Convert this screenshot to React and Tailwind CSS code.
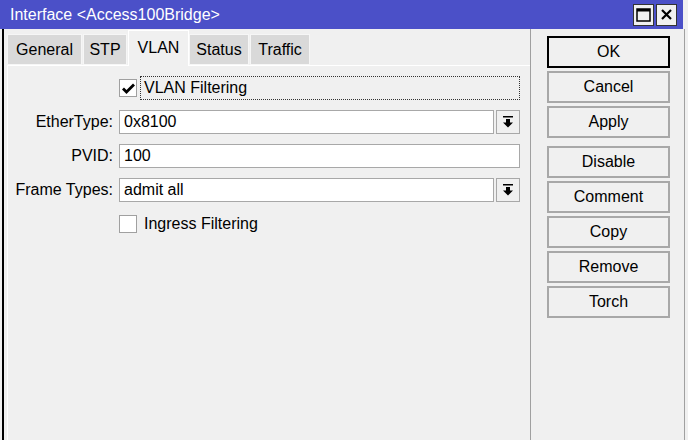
import React from 'react';

const font = { fontFamily: '"Liberation Sans", Arial, sans-serif' };

const DropButton = () => (
    <div className="w-[24px] h-[24px] ml-[2px] border border-[#a8a8a8] bg-[#f0f0f0] flex items-center justify-center">
        <svg width="12" height="14" viewBox="0 0 12 14">
            <rect x="1" y="1" width="10" height="1.5" fill="#000" />
            <path d="M4 4 H8 V7.5 H11 L6 12.5 L1 7.5 H4 Z" fill="#000" />
        </svg>
    </div>
);

const Checkbox = ({ checked }) => (
    <div className="w-[18px] h-[18px] shrink-0 bg-white border border-[#a0a0a0] flex items-center justify-center">
        {checked && (
            <svg width="13" height="11" viewBox="0 0 13 11">
                <path d="M1 5.5 L4.5 9 L12 1.5" stroke="#000" strokeWidth="2.8" fill="none" />
            </svg>
        )}
    </div>
);

const FieldRow = ({ label, value, drop }) => (
    <div className="flex items-center h-[24px]">
        <div className="w-[104px] text-right">{label}</div>
        <div className="ml-[6px] flex flex-1 h-[24px]">
            <div className="flex-1 h-[24px] bg-white border border-[#a8a8a8] flex items-center pl-[4px]">{value}</div>
            {drop && <DropButton />}
        </div>
    </div>
);

const SideButton = ({ label, primary, className = '' }) => (
    <div
        className={`w-[123px] h-[32px] flex items-center justify-center bg-[#f0f0f0] ${
            primary ? 'border-2 border-black' : 'border-2 border-[#a8a8a8]'
        } ${className}`}
    >
        {label}
    </div>
);

const App = () => {
    const tabs = [
        { name: 'General', w: 'w-[75px]' },
        { name: 'STP', w: 'w-[44px]' },
        { name: 'VLAN', w: 'w-[61px]' },
        { name: 'Status', w: 'w-[60px]' },
        { name: 'Traffic', w: 'w-[60px]' },
    ];

    return (
        <div className="w-[688px] h-[440px] bg-[#f0f0f0] overflow-hidden text-[16px] text-black" style={font}>
            {/* title bar */}
            <div className="w-[683px] h-[29px] bg-[#4b50c8] flex items-center pl-[10px] pr-[6px]">
                <span className="text-white text-[16px] flex-1">Interface &lt;Access100Bridge&gt;</span>
                <div className="flex gap-[2px]">
                    <div className="w-[21px] h-[22px] bg-[#f0f0f0] border border-[#333] flex items-center justify-center">
                        <svg width="15" height="14" viewBox="0 0 15 14">
                            <rect x="1" y="1" width="13" height="12" fill="none" stroke="#000" strokeWidth="1.5" />
                            <rect x="1" y="1" width="13" height="2.5" fill="#000" />
                        </svg>
                    </div>
                    <div className="w-[21px] h-[22px] bg-[#f0f0f0] border border-[#333] flex items-center justify-center">
                        <svg width="13" height="13" viewBox="0 0 13 13">
                            <path d="M2 2 L11 11 M11 2 L2 11" stroke="#000" strokeWidth="2.2" />
                        </svg>
                    </div>
                </div>
            </div>

            {/* body */}
            <div className="flex h-[411px] w-[683px] ml-[2px] border-l-2 border-black border-r border-r-[#a0a0a0]">
                {/* left panel */}
                <div className="w-[527px] flex flex-col pl-[3px] border-r border-[#a0a0a0]">
                    <div className="flex items-end h-[36px]">
                        {tabs.map((t) =>
                            t.name === 'VLAN' ? (
                                <div
                                    key={t.name}
                                    className={`${t.w} h-[36px] bg-[#f0f0f0] border border-b-0 border-white flex items-center justify-center pb-[2px] relative z-10 -mb-[1px]`}
                                >
                                    {t.name}
                                </div>
                            ) : (
                                <div
                                    key={t.name}
                                    className={`${t.w} h-[31px] bg-[#d9d9d9] border border-[#f6f6f6] flex items-center justify-center mr-[1px]`}
                                >
                                    {t.name}
                                </div>
                            )
                        )}
                    </div>
                    <div className="flex-1 border-t border-l border-white pl-[1px] pt-[10px] pr-[10px] flex flex-col gap-[10px]">
                        <div className="flex items-center h-[24px]">
                            <div className="w-[110px] shrink-0" />
                            <Checkbox checked />
                            <div className="ml-[3px] flex-1 h-[24px] border border-dotted border-[#333] flex items-center pl-[3px]">
                                VLAN Filtering
                            </div>
                        </div>
                        <FieldRow label="EtherType:" value="0x8100" drop />
                        <FieldRow label="PVID:" value="100" />
                        <FieldRow label="Frame Types:" value="admit all" drop />
                        <div className="flex items-center h-[24px]">
                            <div className="w-[110px] shrink-0" />
                            <Checkbox />
                            <span className="ml-[7px]">Ingress Filtering</span>
                        </div>
                    </div>
                </div>

                {/* right buttons */}
                <div className="flex-1 flex flex-col pt-[7px] pl-[16px]">
                    <SideButton label="OK" primary />
                    <SideButton label="Cancel" className="mt-[3px]" />
                    <SideButton label="Apply" className="mt-[3px]" />
                    <SideButton label="Disable" className="mt-[8px]" />
                    <SideButton label="Comment" className="mt-[3px]" />
                    <SideButton label="Copy" className="mt-[3px]" />
                    <SideButton label="Remove" className="mt-[3px]" />
                    <SideButton label="Torch" className="mt-[3px]" />
                </div>
            </div>
        </div>
    );
};

export default App;
